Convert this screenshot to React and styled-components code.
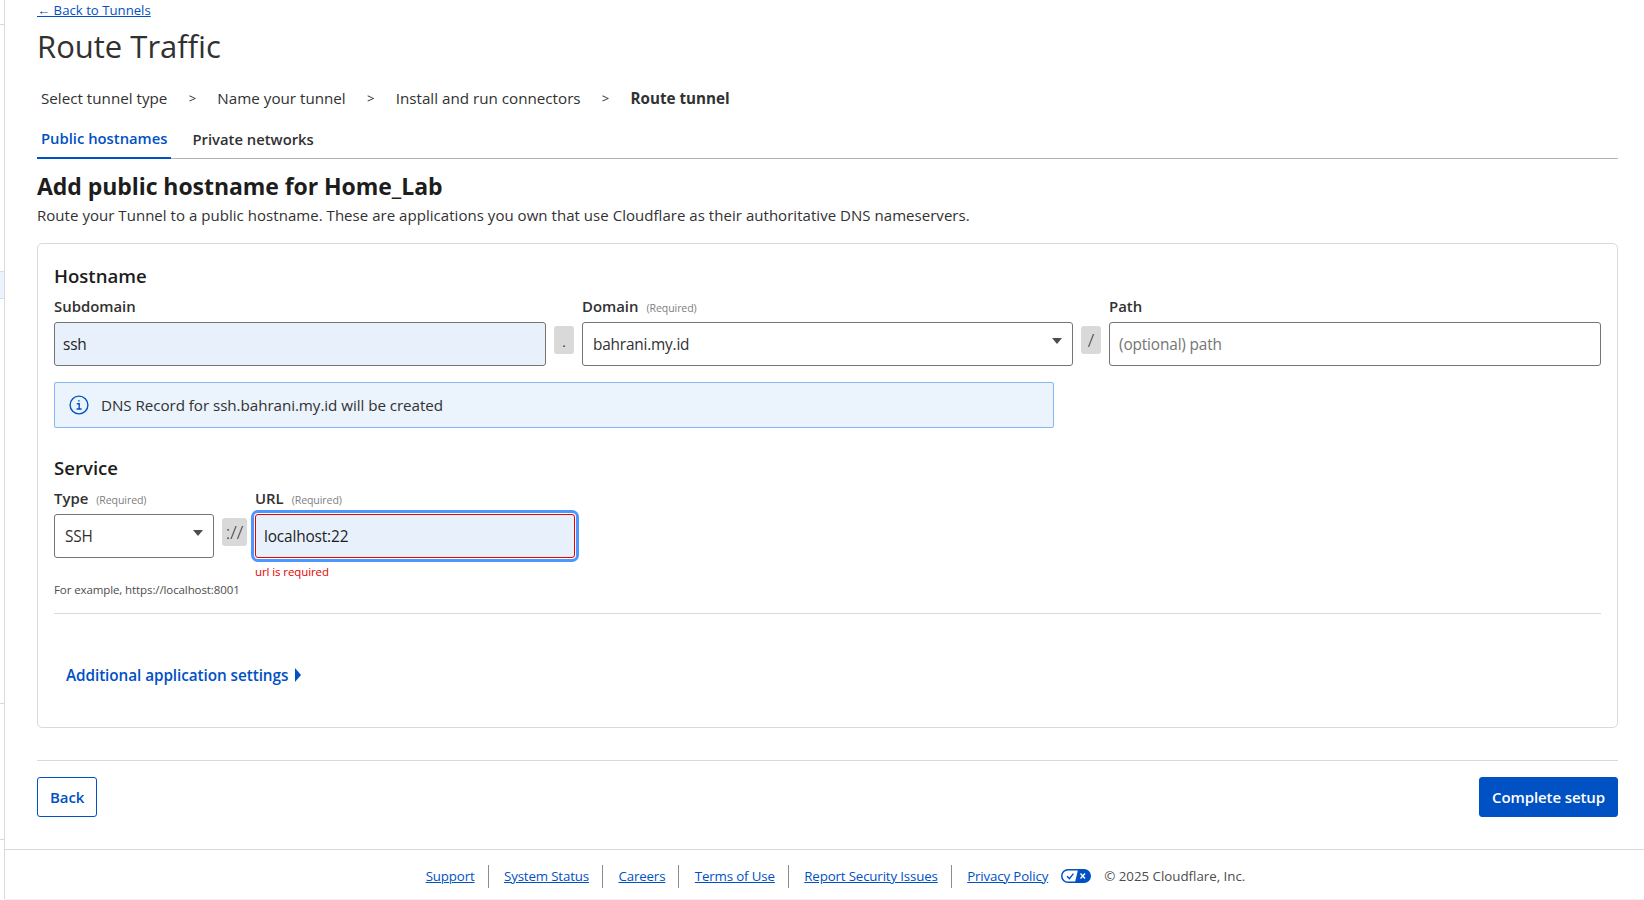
import React from 'react'
import styled, { createGlobalStyle } from 'styled-components'

const GlobalStyle = createGlobalStyle`
  html, body {
    margin: 0;
    padding: 0;
    background: #fff;
    overflow: hidden;
  }
  * {
    box-sizing: border-box;
  }
  body {
    font-family: "Open Sans", "Noto Sans", "Liberation Sans", sans-serif;
    color: #313131;
  }
`

const Page = styled.div`
  display: flex;
  width: 1644px;
  height: 900px;
  overflow: hidden;
`
const Rail = styled.div`
  width: 5px;
  height: 899px;
  flex: none;
  border-right: 1px solid #d9d9d9;
  display: flex;
  flex-direction: column;
`
const RailLine = styled.div`
  height: 1px;
  background: #d9d9d9;
  margin-top: ${p => p.$top}px;
`
const RailActive = styled.div`
  height: 28px;
  margin-top: ${p => p.$top}px;
  background: #ebf3fd;
  border-top: 1px solid #cfe0f7;
  border-bottom: 1px solid #cfe0f7;
`
const Column = styled.div`
  flex: 1;
  display: flex;
  flex-direction: column;
  min-width: 0;
`
const Main = styled.main`
  padding: 0 26px 0 32px;
  height: 849px;
`
const BackLink = styled.a`
  display: block;
  height: 20px;
  font-size: 13.2px;
  line-height: 21px;
  color: #0051c3;
  text-decoration: underline;
`
const Title = styled.h1`
  margin: 4px 0 0;
  font-size: 31px;
  line-height: 44px;
  font-weight: 400;
  color: #313131;
`
const Steps = styled.ol`
  display: flex;
  list-style: none;
  margin: 18px 0 0;
  padding: 0 0 0 4px;
  height: 24px;
  align-items: center;
  font-size: 15.2px;
  color: #313131;
`
const Step = styled.li`
  font-weight: ${p => (p.$current ? 700 : 400)};
`
const StepArrow = styled.span`
  width: 50px;
  text-align: center;
  font-size: 13px;
`
const Tabs = styled.div`
  display: flex;
  margin-top: 11px;
  height: 38px;
  border-bottom: 1px solid #b3b3b3;
`
const Tab = styled.div`
  padding: 0 4px;
  margin-right: 17px;
  height: 38px;
  font-size: 14.8px;
  font-weight: 600;
  line-height: ${p => (p.$active ? '35px' : '37px')};
  color: ${p => (p.$active ? '#0051c3' : '#313131')};
  border-bottom: ${p => (p.$active ? '2px solid #0051c3' : 'none')};
`
const Heading = styled.h2`
  margin: 11px 0 0;
  font-size: 23px;
  line-height: 32px;
  font-weight: 700;
  color: #1d1d1d;
  letter-spacing: -0.06px;
`
const Intro = styled.p`
  margin: 1px 0 0;
  font-size: 15px;
  line-height: 24px;
  color: #313131;
  letter-spacing: 0.04px;
`
const Card = styled.section`
  margin-top: 16px;
  height: 485px;
  border: 1px solid #d9d9d9;
  border-radius: 5px;
  padding: 18px 16px 0;
`
const SectionTitle = styled.h3`
  margin: 0;
  font-size: 18.6px;
  line-height: 28px;
  font-weight: 600;
  color: #1d1d1d;
`
const FieldRow = styled.div`
  display: flex;
  align-items: flex-start;
`
const Field = styled.div`
  display: flex;
  flex-direction: column;
  width: ${p => p.$width}px;
  flex: none;
`
const Label = styled.label`
  display: flex;
  align-items: baseline;
  margin-top: 4px;
  height: 28px;
  line-height: 24px;
  font-size: 14.9px;
  font-weight: 600;
  color: #313131;
`
const Required = styled.span`
  margin-left: 8px;
  font-size: 10.6px;
  font-weight: 400;
  letter-spacing: -0.1px;
  color: #808080;
`
const Input = styled.div`
  height: 44px;
  border: 1px solid ${p => (p.$error ? '#e80000' : '#757575')};
  border-radius: 3px;
  background: ${p => (p.$filled ? '#e8f0fc' : '#fff')};
  padding: 0 ${p => (p.$placeholder ? 9 : 8)}px;
  display: flex;
  align-items: center;
  font-size: 15.4px;
  letter-spacing: -0.15px;
  color: ${p => (p.$placeholder ? '#757575' : '#1d1d1d')};
  position: relative;
  box-shadow: ${p => (p.$error ? '0 0 0 1px #fff, 0 0 0 4px #4c96ff' : 'none')};
`
const SelectBox = styled(Input)`
  padding-left: 10px;
  color: #313131;
  letter-spacing: -0.2px;
`
const Caret = styled.span`
  position: absolute;
  right: 10px;
  top: 15px;
  width: 0;
  height: 0;
  border-left: 5px solid transparent;
  border-right: 5px solid transparent;
  border-top: 6px solid #4d4d4d;
`
const Separator = styled.div`
  flex: none;
  width: ${p => p.$width}px;
  height: 28px;
  margin: 36px ${p => p.$gap}px 0;
  border-radius: 3px;
  background: #d9d9d9;
  display: flex;
  align-items: center;
  justify-content: center;
  font-size: 19px;
  font-weight: 300;
  color: #313131;
`
const Notice = styled.div`
  margin-top: 16px;
  width: 1000px;
  height: 46px;
  display: flex;
  align-items: center;
  gap: 12px;
  padding-left: 14px;
  background: #ebf3fd;
  border: 1px solid #86b7f5;
  border-radius: 2px;
  font-size: 15.2px;
  letter-spacing: -0.06px;
  color: #313131;
`
const ServiceBlock = styled.div`
  margin-top: 26px;
`
const ErrorText = styled.div`
  margin-top: 6px;
  font-size: 11.5px;
  line-height: 16px;
  color: #e80000;
  letter-spacing: -0.1px;
`
const Hint = styled.div`
  margin-top: 2px;
  font-size: 11.5px;
  line-height: 16px;
  color: #4d4d4d;
  letter-spacing: -0.1px;
`
const Rule = styled.hr`
  margin: ${p => p.$top}px 0 0;
  border: none;
  border-top: 1px solid #d9d9d9;
`
const Disclosure = styled.div`
  margin: 51px 0 0 12px;
  display: flex;
  align-items: center;
  gap: 7px;
  font-size: 15.3px;
  font-weight: 600;
  letter-spacing: -0.07px;
  color: #0051c3;
`
const RightArrow = styled.span`
  width: 0;
  height: 0;
  border-top: 7px solid transparent;
  border-bottom: 7px solid transparent;
  border-left: 6px solid #0051c3;
`
const Actions = styled.div`
  display: flex;
  justify-content: space-between;
  margin-top: 16px;
`
const Button = styled.button`
  height: 40px;
  padding: 0 12px;
  border: 1px solid #0051c3;
  border-radius: 3px;
  font-family: inherit;
  font-size: 15px;
  font-weight: 600;
  letter-spacing: -0.1px;
  color: ${p => (p.$primary ? '#fff' : '#0051c3')};
  background: ${p => (p.$primary ? '#0051c3' : '#fff')};
`
const Footer = styled.footer`
  height: 51px;
  border-top: 1px solid #d9d9d9;
  border-bottom: 1px solid #f0f0f0;
  display: flex;
  align-items: center;
  justify-content: center;
  padding: 3px 0 0 22px;
  font-size: 13.3px;
  letter-spacing: -0.15px;
  color: #4d4d4d;
`
const FooterLink = styled.a`
  color: #0051c3;
  text-decoration: underline;
  padding-right: 13px;
  margin-right: 15.5px;
  border-right: ${p => (p.$last ? 'none' : '1px solid #8c8c8c')};
  line-height: 23px;
  ${p => p.$last && 'padding-right: 0; margin-right: 13px;'}
`
const Copyright = styled.span`
  letter-spacing: 0;
`
const PrivacyIcon = styled.svg`
  width: 30px;
  height: 14px;
  margin-right: 13px;
  flex: none;
`
const InfoIcon = styled.svg`
  width: 20px;
  height: 20px;
  flex: none;
`

const steps = ['Select tunnel type', 'Name your tunnel', 'Install and run connectors', 'Route tunnel']
const footerLinks = ['Support', 'System Status', 'Careers', 'Terms of Use', 'Report Security Issues', 'Privacy Policy']

export default function App() {
  return (
    <Page>
      <GlobalStyle />
      <Rail>
        <RailLine $top={24} />
        <RailActive $top={246} />
        <RailLine $top={404} />
        <RailLine $top={135} />
      </Rail>
      <Column>
        <Main>
          <BackLink href="#">← Back to Tunnels</BackLink>
          <Title>Route Traffic</Title>
          <Steps>
            {steps.map((s, i) => (
              <React.Fragment key={s}>
                {i > 0 && <StepArrow>&gt;</StepArrow>}
                <Step $current={i === steps.length - 1}>{s}</Step>
              </React.Fragment>
            ))}
          </Steps>
          <Tabs>
            <Tab $active>Public hostnames</Tab>
            <Tab>Private networks</Tab>
          </Tabs>
          <Heading>Add public hostname for Home_Lab</Heading>
          <Intro>Route your Tunnel to a public hostname. These are applications you own that use Cloudflare as their authoritative DNS nameservers.</Intro>
          <Card>
            <SectionTitle>Hostname</SectionTitle>
            <FieldRow>
              <Field $width={492}>
                <Label>Subdomain</Label>
                <Input $filled>ssh</Input>
              </Field>
              <Separator $width={20} $gap={8}>.</Separator>
              <Field $width={491}>
                <Label>Domain<Required>(Required)</Required></Label>
                <SelectBox>bahrani.my.id<Caret /></SelectBox>
              </Field>
              <Separator $width={20} $gap={8}>/</Separator>
              <Field $width={492}>
                <Label>Path</Label>
                <Input $placeholder>(optional) path</Input>
              </Field>
            </FieldRow>
            <Notice>
              <InfoIcon viewBox="0 0 20 20" fill="none" stroke="#0051c3" strokeWidth="1.4">
                <circle cx="10" cy="10" r="8.9" />
                <path d="M7.8 8.7h2.4v5.2M7.6 14h5" />
                <circle cx="9.9" cy="5.9" r="0.8" fill="#0051c3" stroke="none" />
              </InfoIcon>
              DNS Record for ssh.bahrani.my.id will be created
            </Notice>
            <ServiceBlock>
              <SectionTitle>Service</SectionTitle>
              <FieldRow>
                <Field $width={160}>
                  <Label>Type<Required>(Required)</Required></Label>
                  <SelectBox>SSH<Caret /></SelectBox>
                </Field>
                <Separator $width={25} $gap={8}>://</Separator>
                <Field $width={320}>
                  <Label>URL<Required>(Required)</Required></Label>
                  <Input $filled $error>localhost:22</Input>
                  <ErrorText>url is required</ErrorText>
                </Field>
              </FieldRow>
              <Hint>For example, https://localhost:8001</Hint>
            </ServiceBlock>
            <Rule $top={15} />
            <Disclosure>Additional application settings<RightArrow /></Disclosure>
          </Card>
          <Rule $top={32} />
          <Actions>
            <Button>Back</Button>
            <Button $primary>Complete setup</Button>
          </Actions>
        </Main>
        <Footer>
          {footerLinks.map((l, i) => (
            <FooterLink key={l} href="#" $last={i === footerLinks.length - 1}>{l}</FooterLink>
          ))}
          <PrivacyIcon viewBox="0 0 30 14">
            <rect x="0.75" y="0.75" width="28.5" height="12.5" rx="6.25" fill="#fff" stroke="#0051c3" strokeWidth="1.5" />
            <path d="M17 0.75h6a6.25 6.25 0 0 1 0 12.5h-9z" fill="#0051c3" />
            <path d="M6 7.2l2.4 2.4 4-5" fill="none" stroke="#0051c3" strokeWidth="1.4" />
            <path d="M19.5 4.5l4.5 5M24 4.5l-4.5 5" fill="none" stroke="#fff" strokeWidth="1.4" />
          </PrivacyIcon>
          <Copyright>© 2025 Cloudflare, Inc.</Copyright>
        </Footer>
      </Column>
    </Page>
  )
}
